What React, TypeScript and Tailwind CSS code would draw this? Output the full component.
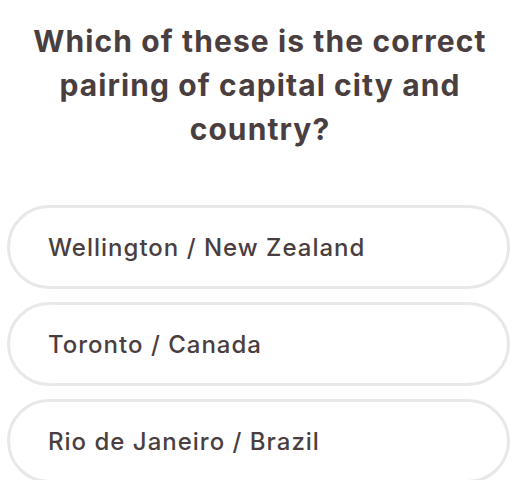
export default function App() {
  const options = ['Wellington / New Zealand', 'Toronto / Canada', 'Rio de Janeiro / Brazil'];
  return (
    <div className="w-[520px] h-[480px] overflow-hidden bg-white font-['Inter',sans-serif] text-[#4a3e40]">
      <h1 className="mx-auto w-[480px] pt-[19px] text-center text-[30px] leading-[44px] font-bold tracking-[1.1px]">
        Which of these is the correct pairing of capital city and country?
      </h1>
      <div className="mt-[54px] flex flex-col gap-[13px] pl-[7px] pr-[10px]">
        {options.map((o) => (
          <button
            key={o}
            className="h-[84px] rounded-[42px] border-[3px] border-[#e8e8e8] pl-[38px] pt-[2px] text-left text-[24px] font-medium tracking-[1px]"
          >
            {o}
          </button>
        ))}
      </div>
    </div>
  );
}
